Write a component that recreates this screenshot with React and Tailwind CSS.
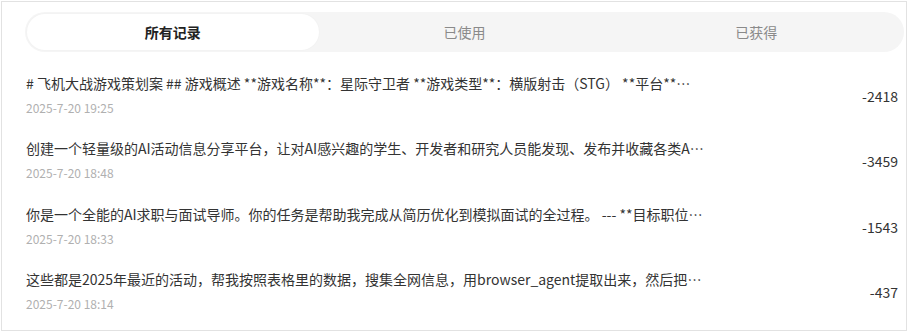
const tabs = ["所有记录", "已使用", "已获得"];

const records = [
  {
    title:
      "# 飞机大战游戏策划案 ## 游戏概述 **游戏名称**：星际守卫者 **游戏类型**：横版射击（STG） **平台**：PC / 移动端 **目标用户**：休闲玩家",
    time: "2025-7-20 19:25",
    amount: "-2418",
  },
  {
    title:
      "创建一个轻量级的AI活动信息分享平台，让对AI感兴趣的学生、开发者和研究人员能发现、发布并收藏各类AI活动信息",
    time: "2025-7-20 18:48",
    amount: "-3459",
  },
  {
    title:
      "你是一个全能的AI求职与面试导师。你的任务是帮助我完成从简历优化到模拟面试的全过程。 --- **目标职位**：产品经理",
    time: "2025-7-20 18:33",
    amount: "-1543",
  },
  {
    title:
      "这些都是2025年最近的活动，帮我按照表格里的数据，搜集全网信息，用browser_agent提取出来，然后把结果整理成表格",
    time: "2025-7-20 18:14",
    amount: "-437",
  },
];

export default function App() {
  return (
    <div
      className="w-[912px] h-[331px] bg-white overflow-hidden"
      style={{ fontFamily: '"Noto Sans CJK SC", "Noto Sans", sans-serif' }}
    >
      <div className="w-[906px] h-[330px] ml-[1px] mt-[1px] border border-[#e2e2e2] pl-[23px] pr-[2px]">
        {/* tabs */}
        <div className="mt-[10px] h-[40px] rounded-full bg-[#f5f5f5] p-[2px] grid grid-cols-3">
          {tabs.map((t, i) => (
            <div
              key={t}
              className={
                i === 0
                  ? "rounded-full bg-white flex items-center justify-center text-[14px] font-bold text-[#222] shadow-[0_0_2px_rgba(0,0,0,0.04)]"
                  : "flex items-center justify-center text-[14px] text-[#8a8a8a]"
              }
            >
              {t}
            </div>
          ))}
        </div>

        {/* records */}
        <div className="mt-[10px] pl-[1px] pr-[6px]">
          {records.map((r) => (
            <div key={r.time} className="h-[65.5px] flex items-center justify-between">
              <div className="flex flex-col gap-[6px] min-w-0">
                <div className="w-[678px] truncate text-[14px] leading-[20px] text-[#333]">
                  {r.title}
                </div>
                <div className="text-[12px] leading-[18px] text-[#b0b0b0]">{r.time}</div>
              </div>
              <div className="mt-[3px] text-[14px] text-[#333]">{r.amount}</div>
            </div>
          ))}
        </div>
      </div>
    </div>
  );
}
